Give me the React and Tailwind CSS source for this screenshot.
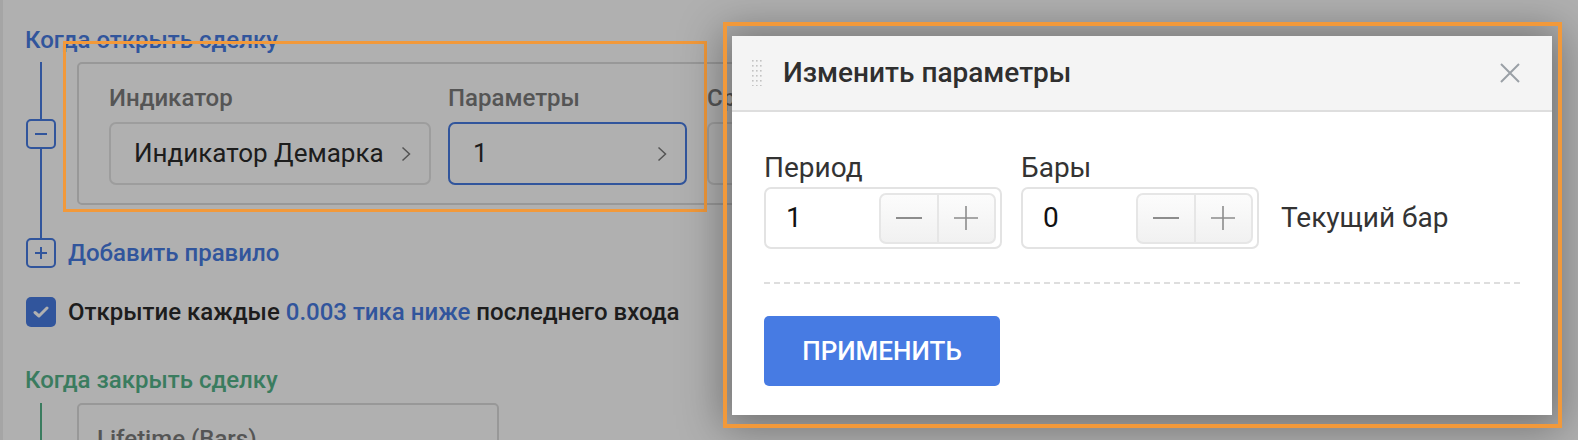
import React from 'react';

const BLUE = '#477be3';

const Chevron = () => (
  <svg width="10" height="16" viewBox="0 0 10 16" className="shrink-0">
    <path d="M1.5 1.5 L8.5 8 L1.5 14.5" fill="none" stroke="#7a7a7a" strokeWidth="1.5" />
  </svg>
);

const Select = ({ value, active, width }) => (
  <div
    className={`flex items-center justify-between h-[63px] pl-[23px] pr-[18px] rounded-[7px] border-2 ${
      active ? 'border-[#477be3]' : 'border-[#e4e4e4]'
    } ${width}`}
  >
    <span className="text-[26px] text-[#2b2b2b] truncate">{value}</span>
    <Chevron />
  </div>
);

const Field = ({ label, children }) => (
  <div className="flex flex-col gap-[10px]">
    <div className="text-[24px] leading-[28px] font-medium text-[#7c7c7c] whitespace-nowrap">{label}</div>
    {children}
  </div>
);

const SquareBtn = ({ plus }) => (
  <div className="w-[30px] h-[30px] rounded-[5px] border-2 border-[#477be3] bg-white flex items-center justify-center shrink-0">
    <svg width="14" height="14" viewBox="0 0 14 14">
      <path d="M1 7 H13" stroke={BLUE} strokeWidth="2" />
      {plus && <path d="M7 1 V13" stroke={BLUE} strokeWidth="2" />}
    </svg>
  </div>
);

const Stepper = () => (
  <div className="flex h-[51px] w-[117px] rounded-[7px] border-2 border-[#e6e6e6] bg-gradient-to-b from-[#fcfcfc] to-[#f1f1f1] overflow-hidden">
    <div className="flex-1 flex items-center justify-center border-r-2 border-[#e6e6e6]">
      <div className="w-[26px] h-[2px] bg-[#8c8c8c]" />
    </div>
    <div className="flex-1 flex items-center justify-center">
      <svg width="24" height="24" viewBox="0 0 24 24">
        <path d="M0 12 H24 M12 0 V24" stroke="#8c8c8c" strokeWidth="1.6" />
      </svg>
    </div>
  </div>
);

const NumberInput = ({ label, value }) => (
  <div className="flex flex-col gap-[3px]">
    <div className="text-[28px] leading-[32px] text-[#333]">{label}</div>
    <div className="flex items-center justify-between w-[238px] h-[62px] rounded-[7px] border-2 border-[#e3e3e3] pl-[20px] pr-[4px]">
      <span className="text-[28px] text-[#111]">{value}</span>
      <Stepper />
    </div>
  </div>
);

export default function App() {
  return (
    <div className="relative w-[1578px] h-[440px] overflow-hidden bg-white font-['Roboto',sans-serif]">
      {/* Page under the dialog */}
      <div className="h-full border-l-[3px] border-[#efefef] pl-[22px] pt-[26px]">
        <div className="text-[24px] leading-[28px] font-medium text-[#477be3]">Когда открыть сделку</div>

        <div className="flex mt-[8px]">
          <div className="w-[32px] flex flex-col items-center">
            <div className="flex-1 w-[2px] bg-[#477be3]" />
            <SquareBtn />
            <div className="flex-1 w-[2px] bg-[#477be3]" />
          </div>
          <div className="ml-[20px] w-[820px] shrink-0 rounded-[5px] border-2 border-[#dcdcdc] pl-[30px] pt-[20px] pb-[18px]">
            <div className="flex">
              <Field label="Индикатор">
                <Select value="Индикатор Демарка" width="w-[322px]" />
              </Field>
              <div className="ml-[17px]">
                <Field label="Параметры">
                  <Select value="1" active width="w-[239px]" />
                </Field>
              </div>
              <div className="ml-[20px]">
                <Field label="Сравнение">
                  <Select value="Больше" width="w-[240px]" />
                </Field>
              </div>
            </div>
          </div>
        </div>

        <div className="w-[32px] flex justify-center">
          <div className="w-[2px] h-[33px] bg-[#477be3]" />
        </div>
        <div className="flex items-center">
          <div className="w-[32px] flex justify-center">
            <SquareBtn plus />
          </div>
          <span className="ml-[11px] text-[24px] leading-[28px] font-medium text-[#477be3]">Добавить правило</span>
        </div>

        <div className="flex items-center mt-[29px]">
          <div className="w-[32px] flex justify-center">
            <div className="w-[30px] h-[30px] rounded-[5px] bg-[#477be3] flex items-center justify-center">
              <svg width="16" height="12" viewBox="0 0 16 12">
                <path d="M2 6.5 L6 10 L14 2" fill="none" stroke="white" strokeWidth="3" strokeLinecap="round" strokeLinejoin="round" />
              </svg>
            </div>
          </div>
          <span className="ml-[11px] text-[24px] leading-[28px] font-medium text-[#2b2b2b]">
            Открытие каждые <span className="text-[#477be3]">0.003 тика ниже</span> последнего входа
          </span>
        </div>

        <div className="mt-[39px] text-[24px] leading-[28px] font-medium text-[#55b48a]">Когда закрыть сделку</div>
        <div className="flex mt-[9px]">
          <div className="w-[32px] flex justify-center">
            <div className="w-[2px] h-[80px] bg-[#55b48a]" />
          </div>
          <div className="ml-[20px] w-[422px] h-[80px] rounded-[5px] border-2 border-[#dcdcdc] pl-[18px] pt-[20px]">
            <div className="text-[24px] leading-[28px] font-medium text-[#7c7c7c]">Lifetime (Bars)</div>
          </div>
        </div>
      </div>

      {/* Backdrop */}
      <div className="absolute inset-0 bg-black/[0.31]" />

      {/* Annotation around the rule */}
      <div className="absolute left-[63px] top-[41px] w-[644px] h-[171px] border-[3px] border-[#f2993a]" />

      {/* Dialog */}
      <div className="absolute left-[732px] top-[36px] w-[820px] bg-white shadow-[0_4px_40px_10px_rgba(0,0,0,0.35)]">
        <div className="flex items-center h-[76px] bg-[#f4f4f4] border-b-2 border-[#dedede] pl-[20px] pr-[32px]">
          <svg width="10" height="26" viewBox="0 0 10 26" className="shrink-0">
            {[0, 1, 2, 3, 4, 5].map((r) =>
              [0, 1, 2].map((c) => (
                <rect key={`${r}-${c}`} x={c * 4} y={r * 5} width="1.6" height="1.6" fill="#c2c2c2" />
              ))
            )}
          </svg>
          <div className="ml-[21px] text-[28px] font-medium text-[#2f2f2f]">Изменить параметры</div>
          <div className="ml-auto">
            <svg width="20" height="20" viewBox="0 0 20 20">
              <path d="M1 1 L19 19 M19 1 L1 19" stroke="#9aa0a6" strokeWidth="2" />
            </svg>
          </div>
        </div>

        <div className="px-[32px] pt-[40px] pb-[29px]">
          <div className="flex items-end">
            <NumberInput label="Период" value="1" />
            <div className="ml-[19px]">
              <NumberInput label="Бары" value="0" />
            </div>
            <div className="ml-[22px] h-[62px] flex items-center text-[28px] text-[#333]">Текущий бар</div>
          </div>

          <div className="mt-[33px] border-t-2 border-dashed border-[#dedede]" />

          <button className="mt-[32px] w-[236px] h-[70px] rounded-[5px] bg-[#477be3] text-white text-[26px] font-medium">
            ПРИМЕНИТЬ
          </button>
        </div>
      </div>

      {/* Annotation around the dialog */}
      <div className="absolute left-[723px] top-[22px] w-[839px] h-[406px] border-4 border-[#f2993a]" />
    </div>
  );
}
